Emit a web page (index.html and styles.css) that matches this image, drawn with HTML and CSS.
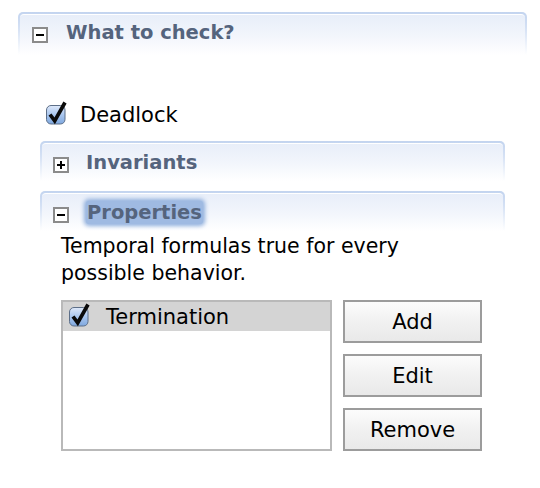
FILE: index.html
```html
<!DOCTYPE html>
<html>
<head>
<meta charset="utf-8">
<link rel="stylesheet" href="styles.css">
</head>
<body>
<div class="page">
  <div class="section outer">
    <div class="frame">
      <div class="head">
        <span class="toggle minus"></span>
        <span class="title">What to check?</span>
      </div>
    </div>
    <div class="body outer-body">
      <label class="check-row deadlock">
        <svg class="cb" width="24" height="26" viewBox="0 0 24 26"><defs><linearGradient id="g1" x1="0" y1="0" x2="0" y2="1"><stop offset="0" stop-color="#dfe9fa"/><stop offset="0.5" stop-color="#a9c6ee"/><stop offset="1" stop-color="#7fa8df"/></linearGradient></defs><rect x="1.5" y="5.5" width="18.5" height="18.5" rx="4.5" fill="url(#g1)" stroke="#5d6f88"/><path d="M5 14.5 L9.7 20.8 L20 2.5" fill="none" stroke="#0a0a0a" stroke-width="3.7"/></svg>
        <span>Deadlock</span>
      </label>

      <div class="section inner">
        <div class="frame">
          <div class="head">
            <span class="toggle plus"></span>
            <span class="title">Invariants</span>
          </div>
        </div>
      </div>

      <div class="section inner props">
        <div class="frame">
          <div class="head">
            <span class="toggle minus"></span>
            <span class="title focused">Properties</span>
          </div>
        </div>
        <div class="body props-body">
          <p class="desc">Temporal formulas true for every possible behavior.</p>
          <div class="list-area">
            <div class="list">
              <div class="item selected">
                <svg class="cb" width="24" height="26" viewBox="0 0 24 26"><defs><linearGradient id="g2" x1="0" y1="0" x2="0" y2="1"><stop offset="0" stop-color="#dfe9fa"/><stop offset="0.5" stop-color="#a9c6ee"/><stop offset="1" stop-color="#7fa8df"/></linearGradient></defs><rect x="1.5" y="5.5" width="18.5" height="18.5" rx="4.5" fill="url(#g2)" stroke="#5d6f88"/><path d="M5 14.5 L9.7 20.8 L20 2.5" fill="none" stroke="#0a0a0a" stroke-width="3.7"/></svg>
                <span>Termination</span>
              </div>
            </div>
            <div class="buttons">
              <button class="btn">Add</button>
              <button class="btn">Edit</button>
              <button class="btn">Remove</button>
            </div>
          </div>
        </div>
      </div>
    </div>
  </div>
</div>
</body>
</html>
```
FILE: styles.css
```css
html, body {
  margin: 0;
  padding: 0;
  background: #ffffff;
}
body {
  font-family: "DejaVu Sans", Verdana, sans-serif;
  color: #000;
}
.page {
  padding: 12px 13px 0 18px;
}
.frame {
  background: linear-gradient(to bottom, #c3d4ef 0%, #d6e2f5 40%, rgba(255,255,255,0) 100%);
  padding: 2px 2px 0 2px;
  border-radius: 5px 5px 0 0;
}
.head {
  background: linear-gradient(to bottom, #e8eef9 0%, #f3f6fc 55%, #ffffff 100%);
  border-top: 1px solid #ffffff;
  border-radius: 4px 4px 0 0;
  display: flex;
  align-items: center;
}
.outer > .frame > .head {
  padding-left: 12px;
  padding-bottom: 5px;
  box-sizing: border-box;
  height: 41px;
}
.inner > .frame > .head {
  height: 37px;
  padding-left: 11px;
}
.toggle {
  width: 12px;
  height: 12px;
  border: 2px solid #8b8b8b;
  background: #fff;
  position: relative;
  flex: none;
  margin-top: 4px;
}
.toggle::before {
  content: "";
  position: absolute;
  left: 2px;
  top: 5px;
  width: 8px;
  height: 2px;
  background: #000;
}
.toggle.plus::after {
  content: "";
  position: absolute;
  left: 5px;
  top: 2px;
  width: 2px;
  height: 8px;
  background: #000;
}
.title {
  font-weight: bold;
  font-size: 19.5px;
  color: #55647d;
  margin-left: 18px;
}
.inner .title {
  margin-left: 17px;
}
.title.focused {
  background: #9fbae2;
  border-radius: 3px;
  box-shadow: 0 0 4px 2px #8eaedc;
  padding: 0 1px;
  margin-left: 17px;
}
.outer-body {
  padding: 48px 22px 0 22px;
}
.check-row {
  display: flex;
  align-items: center;
  font-size: 21px;
  height: 24px;
}
.deadlock .cb {
  margin-left: 5px;
  margin-right: 11px;
  margin-top: -4px;
}
.inner {
  margin-top: 14px;
}
.inner.props {
  margin-top: 10px;
}
.props-body {
  padding: 0 0 0 21px;
}
.desc {
  margin: 0;
  font-size: 20.5px;
  line-height: 27px;
  width: 380px;
  padding-top: 2px;
}
.list-area {
  display: flex;
  margin-top: 13px;
}
.list {
  width: 267px;
  height: 147px;
  border: 2px solid #b9b9b9;
  background: #fff;
}
.item {
  display: flex;
  align-items: center;
  height: 29px;
  font-size: 21px;
}
.item.selected {
  background: #d4d4d4;
}
.item .cb {
  margin-left: 5px;
  margin-right: 14px;
  margin-top: -4px;
}
.buttons {
  display: flex;
  flex-direction: column;
  gap: 11px;
  margin-left: 11px;
}
.btn {
  width: 139px;
  height: 43px;
  border: 2px solid #9c9c9c;
  background: linear-gradient(to bottom, #fcfcfc 0%, #f1f1f1 50%, #e9e9e9 100%);
  font-family: "DejaVu Sans", Verdana, sans-serif;
  font-size: 21px;
  color: #000;
  padding: 0;
  margin: 0;
  border-radius: 0;
}
```
